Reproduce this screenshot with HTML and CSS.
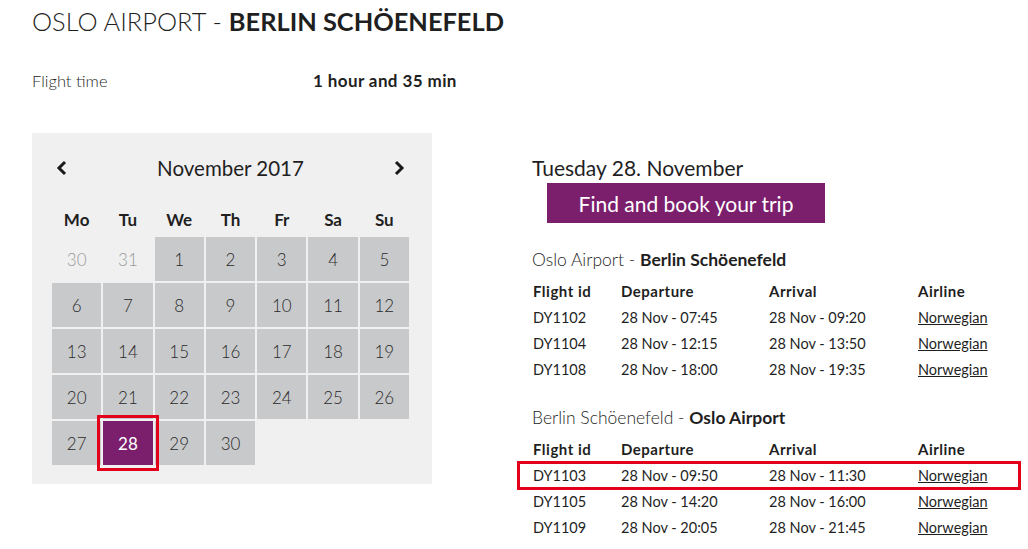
FILE: index.html
```html
<!DOCTYPE html>
<html lang="en">

<head>
    <meta charset="UTF-8">
    <title>Oslo Airport - Berlin Schöenefeld</title>
    <link rel="stylesheet" href="styles.css">
</head>

<body>
    <div class="page">
        <h1 class="route-title">OSLO AIRPORT - <strong>BERLIN SCHÖENEFELD</strong></h1>

        <div class="flight-time">
            <span class="label">Flight time</span>
            <span class="value">1 hour and 35 min</span>
        </div>

        <div class="main">
            <div class="calendar">
                <div class="cal-nav">
                    <button class="nav-btn" type="button">
                        <svg width="14" height="16" viewBox="0 0 14 16"><polyline points="10,2 4,8 10,14" fill="none" stroke="#1a1a1a" stroke-width="3" /></svg>
                    </button>
                    <span class="month">November 2017</span>
                    <button class="nav-btn" type="button">
                        <svg width="14" height="16" viewBox="0 0 14 16"><polyline points="4,2 10,8 4,14" fill="none" stroke="#1a1a1a" stroke-width="3" /></svg>
                    </button>
                </div>

                <div class="cal-grid">
                    <div class="wd">Mo</div>
                    <div class="wd">Tu</div>
                    <div class="wd">We</div>
                    <div class="wd">Th</div>
                    <div class="wd">Fr</div>
                    <div class="wd">Sa</div>
                    <div class="wd">Su</div>

                    <div class="day muted">30</div>
                    <div class="day muted">31</div>
                    <div class="day">1</div>
                    <div class="day">2</div>
                    <div class="day">3</div>
                    <div class="day">4</div>
                    <div class="day">5</div>

                    <div class="day">6</div>
                    <div class="day">7</div>
                    <div class="day">8</div>
                    <div class="day">9</div>
                    <div class="day">10</div>
                    <div class="day">11</div>
                    <div class="day">12</div>

                    <div class="day">13</div>
                    <div class="day">14</div>
                    <div class="day">15</div>
                    <div class="day">16</div>
                    <div class="day">17</div>
                    <div class="day">18</div>
                    <div class="day">19</div>

                    <div class="day">20</div>
                    <div class="day">21</div>
                    <div class="day">22</div>
                    <div class="day">23</div>
                    <div class="day">24</div>
                    <div class="day">25</div>
                    <div class="day">26</div>

                    <div class="day">27</div>
                    <div class="day selected">28</div>
                    <div class="day">29</div>
                    <div class="day">30</div>
                </div>
            </div>

            <div class="details">
                <h2 class="date-title">Tuesday 28. November</h2>
                <button class="book-btn" type="button">Find and book your trip</button>

                <h3 class="leg-title">Oslo Airport - <strong>Berlin Schöenefeld</strong></h3>
                <div class="flights">
                    <div class="frow head">
                        <span>Flight id</span><span>Departure</span><span>Arrival</span><span>Airline</span>
                    </div>
                    <div class="frow">
                        <span>DY1102</span><span>28 Nov - 07:45</span><span>28 Nov - 09:20</span><a href="#">Norwegian</a>
                    </div>
                    <div class="frow">
                        <span>DY1104</span><span>28 Nov - 12:15</span><span>28 Nov - 13:50</span><a href="#">Norwegian</a>
                    </div>
                    <div class="frow">
                        <span>DY1108</span><span>28 Nov - 18:00</span><span>28 Nov - 19:35</span><a href="#">Norwegian</a>
                    </div>
                </div>

                <h3 class="leg-title second">Berlin Schöenefeld - <strong>Oslo Airport</strong></h3>
                <div class="flights">
                    <div class="frow head">
                        <span>Flight id</span><span>Departure</span><span>Arrival</span><span>Airline</span>
                    </div>
                    <div class="frow marked">
                        <span>DY1103</span><span>28 Nov - 09:50</span><span>28 Nov - 11:30</span><a href="#">Norwegian</a>
                    </div>
                    <div class="frow">
                        <span>DY1105</span><span>28 Nov - 14:20</span><span>28 Nov - 16:00</span><a href="#">Norwegian</a>
                    </div>
                    <div class="frow">
                        <span>DY1109</span><span>28 Nov - 20:05</span><span>28 Nov - 21:45</span><a href="#">Norwegian</a>
                    </div>
                </div>
            </div>
        </div>
    </div>
</body>

</html>
```

FILE: styles.css
```css
body {
    margin: 0;
    font-family: Lato, "Open Sans", sans-serif;
    color: #1f1f1f;
    background: white;
}

.page {
    padding: 0 32px;
}

.route-title {
    margin: 0;
    padding-top: 1px;
    font-size: 25.4px;
    line-height: 40px;
    font-weight: 300;
}

.route-title strong {
    font-weight: 700;
}

.flight-time {
    display: flex;
    margin-top: 28px;
    font-size: 16.5px;
    line-height: 24px;
}

.flight-time .label {
    width: 281px;
    font-weight: 300;
}

.flight-time .value {
    font-size: 17px;
    font-weight: 700;
    letter-spacing: 0.4px;
}

.main {
    display: flex;
    align-items: flex-start;
    gap: 100px;
    margin-top: 40px;
}

/* calendar */
.calendar {
    flex-shrink: 0;
    width: 400px;
    box-sizing: border-box;
    background: #f0f0f1;
    padding: 20px 23px 19px 20px;
}

.cal-nav {
    display: flex;
    align-items: center;
    justify-content: space-between;
    height: 30px;
    margin-bottom: 20px;
}

.nav-btn {
    background: none;
    border: none;
    padding: 0 0 0 3px;
    width: 24px;
    height: 30px;
    display: flex;
    align-items: center;
    cursor: pointer;
}

.nav-btn:last-child {
    justify-content: flex-end;
    padding: 0 3px 0 0;
}

.month {
    font-size: 20.5px;
    font-weight: 400;
}

.cal-grid {
    display: grid;
    grid-template-columns: repeat(7, 1fr);
    grid-template-rows: 32px repeat(5, 44px);
    gap: 2px;
}

.wd {
    display: flex;
    align-items: center;
    justify-content: center;
    font-size: 17px;
    font-weight: 700;
}

.day {
    display: flex;
    align-items: center;
    justify-content: center;
    background: #c8c9cb;
    font-size: 17px;
    font-weight: 300;
    color: #2a2a2a;
}

.day.muted {
    background: none;
    color: #9a9a9a;
}

/* picked date, framed so it stays on top of its neighbours */
.day.selected {
    position: relative;
    z-index: 1;
    background: #7b1f6d;
    color: white;
    font-weight: 400;
    outline: 3px solid #e2001a;
    outline-offset: 3px;
}

/* flight details */
.details {
    flex: 1;
    padding-top: 20px;
}

.date-title {
    margin: 0;
    font-size: 21px;
    line-height: 30px;
    font-weight: 400;
}

.book-btn {
    display: block;
    margin-left: 15px;
    width: 278px;
    height: 40px;
    border: none;
    background: #7b1f6d;
    color: white;
    font-family: inherit;
    font-size: 21px;
    cursor: pointer;
}

.leg-title {
    margin: 25px 0 0;
    font-size: 17.5px;
    line-height: 24px;
    font-weight: 300;
}

.leg-title.second {
    margin-top: 24px;
}

.leg-title strong {
    font-weight: 700;
}

.flights {
    margin-top: 6px;
    width: 486px;
    margin-left: 1px;
}

.frow {
    display: grid;
    grid-template-columns: 88px 148px 149px 1fr;
    height: 26px;
    align-items: center;
    font-size: 14.5px;
    font-weight: 400;
}

.frow.head {
    font-size: 15px;
    font-weight: 700;
    letter-spacing: 0.5px;
}

.frow a {
    color: #1f1f1f;
}

.frow.marked {
    position: relative;
}

.frow.marked::after {
    content: "";
    position: absolute;
    top: -1px;
    bottom: -2px;
    left: -16px;
    right: -2px;
    border: 3px solid #e2001a;
}
```
